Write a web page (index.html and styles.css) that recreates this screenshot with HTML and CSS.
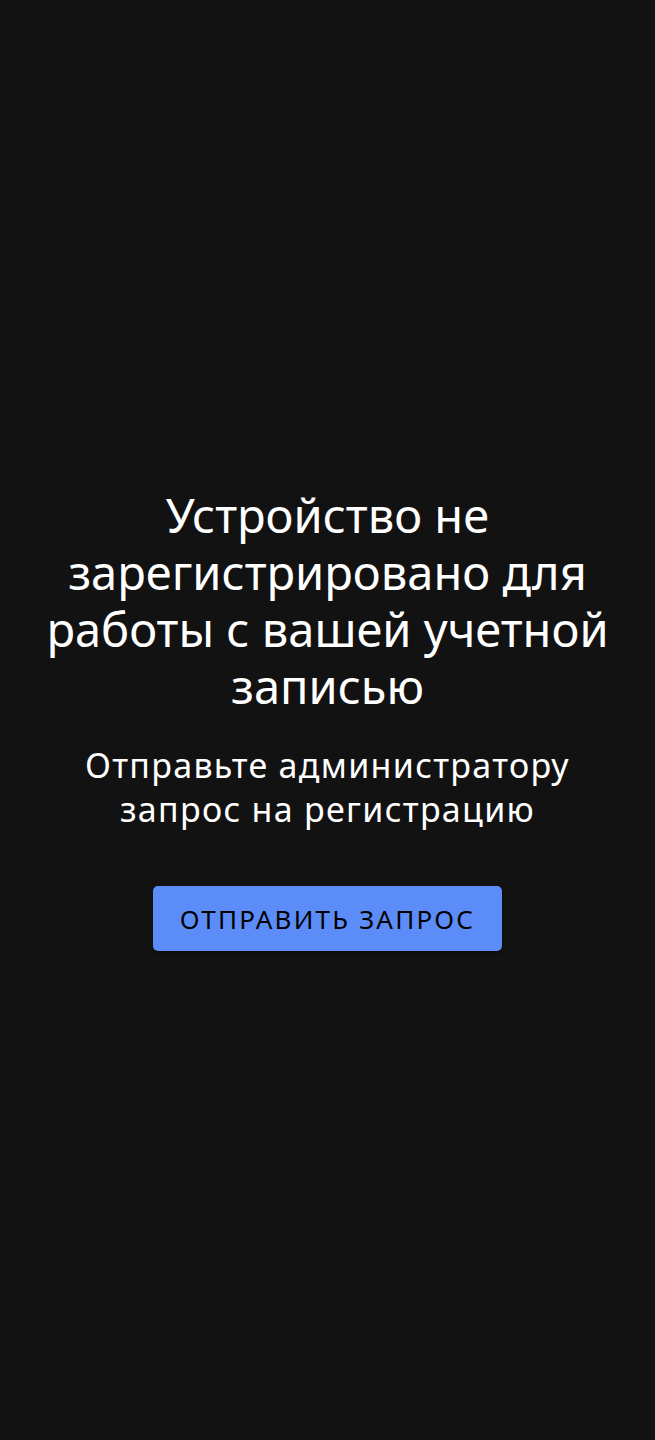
FILE: index.html
```html
<!DOCTYPE html>
<html lang="ru">
<head>
<meta charset="utf-8">
<link rel="stylesheet" href="styles.css">
</head>
<body>
<main class="screen">
  <h1 class="title">Устройство не зарегистрировано для работы с вашей учетной записью</h1>
  <p class="subtitle">Отправьте администратору запрос на регистрацию</p>
  <button class="btn">ОТПРАВИТЬ ЗАПРОС</button>
</main>
</body>
</html>
```
FILE: styles.css
```css
html, body {
  margin: 0;
  padding: 0;
  background: #121212;
}
.screen {
  height: 1440px;
  display: flex;
  flex-direction: column;
  align-items: center;
  justify-content: center;
  padding: 0 40px 2px;
  box-sizing: border-box;
  font-family: "Noto Sans", "Open Sans", sans-serif;
  color: #ffffff;
  text-align: center;
}
.title {
  margin: 0;
  font-size: 47px;
  font-weight: 400;
  line-height: 57px;
}
.subtitle {
  margin: 28px 0 0;
  font-size: 34px;
  line-height: 44px;
  letter-spacing: 1.3px;
}
.btn {
  margin-top: 55px;
  width: 349px;
  height: 65px;
  padding: 0;
  border: none;
  border-radius: 5px;
  background: #5c8cf8;
  color: #000;
  font-family: "Noto Sans", "Open Sans", sans-serif;
  font-size: 26px;
  letter-spacing: 2.2px;
  box-shadow: 0 2px 3px rgba(0,0,0,0.4);
}
```
